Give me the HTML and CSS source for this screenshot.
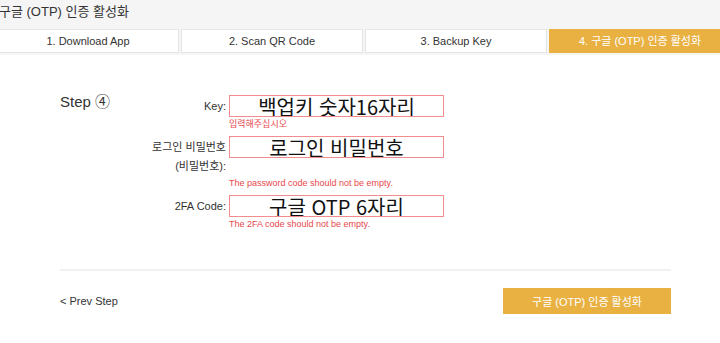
FILE: index.html
```html
<!DOCTYPE html>
<html lang="ko">
<head>
    <meta charset="UTF-8">
    <title>구글 (OTP) 인증 활성화</title>
    <link rel="stylesheet" href="styles.css">
</head>
<body>
    <!-- Header with step tabs -->
    <div class="header">
        <h1 class="page-title">구글 (OTP) 인증 활성화</h1>
        <ul class="tabs">
            <li class="tab">1. Download App</li>
            <li class="tab">2. Scan QR Code</li>
            <li class="tab">3. Backup Key</li>
            <li class="tab active">4. 구글 (OTP) 인증 활성화</li>
        </ul>
    </div>

    <!-- Step 4 form -->
    <div class="panel">
        <div class="panel-body">
            <div class="step-title">Step ④</div>
            <form class="otp-form">
                <label class="field-label" for="backupKey">Key:</label>
                <input class="field-input" type="text" id="backupKey" value="백업키 숫자16자리">
                <div class="field-error">입력해주십시오</div>

                <label class="field-label" for="password">로그인 비밀번호 (비밀번호):</label>
                <input class="field-input" type="password" id="password" placeholder="로그인 비밀번호">
                <div class="field-error">The password code should not be empty.</div>

                <label class="field-label" for="code">2FA Code:</label>
                <input class="field-input" type="text" id="code" placeholder="구글 OTP 6자리">
                <div class="field-error">The 2FA code should not be empty.</div>
            </form>
        </div>

        <div class="panel-footer">
            <a class="prev-link" href="#">&lt; Prev Step</a>
            <button class="submit-btn" type="button">구글 (OTP) 인증 활성화</button>
        </div>
    </div>
</body>
</html>
```

FILE: styles.css
```css
/* Base */
body {
    margin: 0;
    font-family: "Liberation Sans", Arial, "Noto Sans CJK KR", sans-serif;
    color: #333;
    background-color: #fff;
    overflow: hidden;
}

/* Header */
.header {
    background-color: #f5f5f5;
    padding-bottom: 2px;
}

.page-title {
    margin: 0 0 0 -1px;
    height: 29px;
    line-height: 24px;
    font-size: 13px;
    font-weight: normal;
    color: #333;
}

.tabs {
    display: flex;
    gap: 2px;
    margin: 0 0 0 -3px;
    padding: 0;
    list-style: none;
}

.tab {
    flex: 0 0 182px;
    height: 24px;
    line-height: 23px;
    box-sizing: border-box;
    background-color: #fff;
    border: 1px solid #e6e6e6;
    text-align: center;
    font-size: 11px;
    color: #333;
}

.tab.active {
    background-color: #e8b142;
    border-color: #e8b142;
    color: #fff;
}

/* Panel */
.panel {
    padding: 38px 49px 0 60px;
}

.panel-body {
    display: flex;
}

.step-title {
    width: 80px;
    font-size: 15px;
    line-height: 18px;
    color: #333;
}

.otp-form {
    display: grid;
    grid-template-columns: 86px 215px;
    column-gap: 3px;
    align-items: start;
    margin-top: 2px;
}

.field-label {
    padding-top: 2px;
    font-size: 11px;
    line-height: 19px;
    text-align: right;
    color: #333;
}

.field-input {
    height: 22px;
    box-sizing: border-box;
    width: 100%;
    margin: 0;
    padding: 0 4px;
    border: 1px solid #f28c8f;
    font-family: "Noto Sans CJK KR", "Liberation Sans", sans-serif;
    font-size: 20px;
    text-align: center;
    color: #111;
    outline: none;
}

.field-input::placeholder {
    color: #111;
}

.field-error {
    grid-column: 2;
    padding-top: 1px;
    margin-bottom: 5px;
    height: 13px;
    line-height: 13px;
    font-size: 9px;
    color: #e8474c;
}

/* Footer */
.panel-footer {
    display: flex;
    align-items: center;
    justify-content: space-between;
    margin-top: 33px;
    padding-top: 17px;
    border-top: 2px solid #f1f1f1;
}

.prev-link {
    font-size: 11px;
    color: #333;
    text-decoration: none;
}

.submit-btn {
    width: 168px;
    height: 26px;
    border: none;
    background-color: #e8b142;
    color: #fff;
    font-family: "Liberation Sans", Arial, "Noto Sans CJK KR", sans-serif;
    font-size: 11px;
    cursor: pointer;
}
```
